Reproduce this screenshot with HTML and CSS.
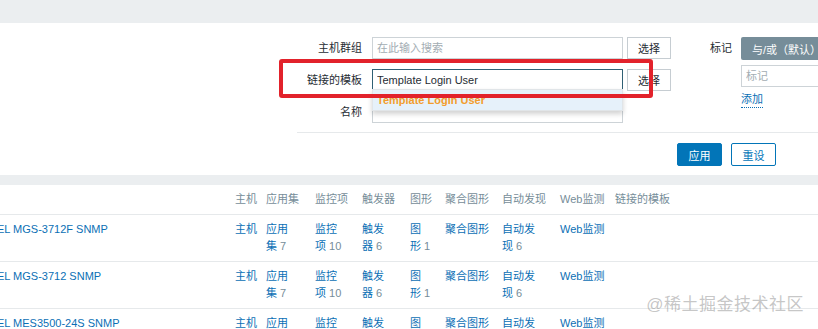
FILE: index.html
```html
<!DOCTYPE html>
<html lang="zh-CN">
<head>
    <meta charset="UTF-8">
    <meta name="viewport" content="width=device-width, initial-scale=1.0">
    <title>模板</title>
    <link rel="stylesheet" href="styles.css">
</head>
<body>
    <div class="top-band"></div>

    <div class="filter">
        <div class="filter-form">
            <div class="filter-col">
                <label class="filter-label">主机群组</label>
                <input class="text-input" type="text" placeholder="在此输入搜索">
                <button class="btn-select">选择</button>

                <label class="filter-label">链接的模板</label>
                <div class="suggest-wrap">
                    <input class="text-input focused" type="text" value="Template Login User">
                    <div class="suggest">
                        <div class="suggest-item">Template Login User</div>
                    </div>
                </div>
                <button class="btn-select">选择</button>

                <label class="filter-label">名称</label>
                <input class="text-input" type="text">
                <span></span>
            </div>

            <div class="filter-col tags">
                <label class="filter-label">标记</label>
                <div class="tag-controls">
                    <button class="btn-gray">与/或（默认）</button>
                    <input class="text-input tag-input" type="text" placeholder="标记">
                    <a class="link-add" href="#">添加</a>
                </div>
            </div>
        </div>

        <div class="filter-actions">
            <button class="btn-primary">应用</button>
            <button class="btn-outline">重设</button>
        </div>

        <!-- highlight drawn over the screenshot -->
        <div class="highlight"></div>
    </div>

    <div class="mid-band"></div>

    <table class="list">
        <colgroup>
            <col class="c-name">
            <col class="c-host">
            <col class="c-app">
            <col class="c-item">
            <col class="c-trig">
            <col class="c-graph">
            <col class="c-screen">
            <col class="c-disc">
            <col class="c-web">
            <col>
        </colgroup>
        <thead>
            <tr>
                <th></th>
                <th>主机</th>
                <th>应用集</th>
                <th>监控项</th>
                <th>触发器</th>
                <th>图形</th>
                <th>聚合图形</th>
                <th>自动发现</th>
                <th>Web监测</th>
                <th>链接的模板</th>
            </tr>
        </thead>
        <tbody id="rows"></tbody>
    </table>

    <div class="watermark">@稀土掘金技术社区</div>

    <script>
        const templates = [
            'EL MGS-3712F SNMP',
            'EL MGS-3712 SNMP',
            'EL MES3500-24S SNMP'
        ];

        const rowsEl = document.getElementById('rows');

        templates.forEach(name => {
            const tr = document.createElement('tr');
            tr.innerHTML = `
                <td class="name"><a href="#">${name}</a></td>
                <td class="host"><a href="#">主机</a></td>
                <td class="app"><a href="#">应用集</a> <sup>7</sup></td>
                <td class="item"><a href="#">监控项</a> <sup>10</sup></td>
                <td class="trig"><a href="#">触发器</a> <sup>6</sup></td>
                <td class="graph"><a href="#">图形</a> <sup>1</sup></td>
                <td class="screen"><a href="#">聚合图形</a></td>
                <td class="disc"><a href="#">自动发现</a> <sup>6</sup></td>
                <td class="web"><a href="#">Web监测</a></td>
                <td></td>`;
            rowsEl.appendChild(tr);
        });
    </script>
</body>
</html>
```

FILE: styles.css
```css
body {
    margin: 0;
    background: #ebeef0;
    font-family: 'Liberation Sans', 'Noto Sans CJK SC', sans-serif;
    font-size: 11px;
    line-height: 17px;
    color: #1f2c33;
    overflow: hidden;
    position: relative;
    height: 329px;
}
a {
    color: #0b6fb5;
    text-decoration: none;
}
input, button {
    font-family: inherit;
    font-size: 11px;
    box-sizing: border-box;
    margin: 0;
}
.top-band {
    height: 23px;
}
.filter {
    background: white;
    height: 152px;
    position: relative;
}
.filter-form {
    margin-left: 297px;
    padding-top: 14px;
    padding-bottom: 9px;
    border-bottom: 1px solid #e6e9eb;
    display: flex;
    align-items: flex-start;
}
.filter-col {
    display: grid;
    grid-template-columns: 71px 251px 44px;
    column-gap: 4px;
    row-gap: 10px;
    align-items: center;
}
.filter-label {
    text-align: right;
    padding-right: 6px;
    line-height: 22px;
}
.text-input {
    height: 22px;
    width: 100%;
    border: 1px solid #cdd3d7;
    padding: 0 4px;
    color: #1f2c33;
    background: white;
    outline: none;
}
.text-input::placeholder {
    color: #a3adb3;
}
.text-input.focused {
    border-color: #2f6074;
}
.suggest-wrap {
    position: relative;
    height: 22px;
}
.suggest {
    position: absolute;
    left: 0;
    right: 0;
    top: 20px;
    background: white;
    border: 1px solid #e1e5e8;
    box-shadow: 0 3px 5px rgba(0, 0, 0, 0.18);
    z-index: 2;
}
.suggest-item {
    background: #e6f1fa;
    padding: 0 4px;
    line-height: 20px;
    color: #f29d2c;
    font-weight: bold;
}
.btn-select {
    height: 22px;
    background: white;
    border: 1px solid #c6cdd2;
    color: #1f2c33;
    padding: 0;
}
.tags {
    grid-template-columns: 61px 100px;
    column-gap: 9px;
    align-items: start;
}
.tags .filter-label {
    padding-right: 0;
}
.tag-controls {
    display: flex;
    flex-direction: column;
    align-items: flex-start;
}
.btn-gray {
    height: 23px;
    width: 100px;
    text-align: left;
    background: #768d99;
    border: none;
    border-radius: 2px;
    color: white;
    padding: 0 0 0 11px;
    white-space: nowrap;
}
.tag-input {
    margin-top: 5px;
}
.link-add {
    margin-top: 4px;
    line-height: 16px;
    border-bottom: 1px dotted #0b6fb5;
}
.filter-actions {
    display: flex;
    gap: 9px;
    padding: 10px 0 0 677px;
}
.filter-actions button {
    height: 23px;
    width: 45px;
    border-radius: 2px;
    padding: 0;
}
.btn-primary {
    background: #0275b8;
    border: 1px solid #0275b8;
    color: white;
}
.btn-outline {
    background: white;
    border: 1px solid #0275b8;
    color: #0275b8;
}
.highlight {
    position: absolute;
    left: 279px;
    top: 36px;
    width: 374px;
    height: 39px;
    box-sizing: border-box;
    border: 4px solid #e2222b;
    border-radius: 3px;
    z-index: 3;
}
.mid-band {
    height: 10px;
}
.list {
    width: 100%;
    background: white;
    border-collapse: collapse;
    table-layout: fixed;
}
.c-name { width: 235px; }
.c-host { width: 31px; }
.c-app { width: 49px; }
.c-item { width: 47px; }
.c-trig { width: 48px; }
.c-graph { width: 35px; }
.c-screen { width: 57px; }
.c-disc { width: 58px; }
.c-web { width: 55px; }
.list th,
.list td {
    text-align: left;
    vertical-align: top;
    padding: 6px 5px 6px 0;
    border-bottom: 1px solid #e6e9eb;
}
.list th {
    font-weight: normal;
    color: #768d99;
    white-space: nowrap;
}
.list td.name {
    text-indent: -3px;
    white-space: nowrap;
}
.list td.app { padding-right: 18px; }
.list td.item { padding-right: 16px; }
.list td.trig { padding-right: 16px; }
.list td.graph { padding-right: 14px; }
.list td.disc { padding-right: 20px; }
.list sup {
    vertical-align: baseline;
    font-size: 11px;
    color: #768d99;
}
.watermark {
    position: absolute;
    right: 14px;
    top: 294px;
    font-size: 17px;
    line-height: 22px;
    color: rgba(150, 150, 150, 0.55);
    letter-spacing: 0.5px;
    z-index: 4;
}
```
